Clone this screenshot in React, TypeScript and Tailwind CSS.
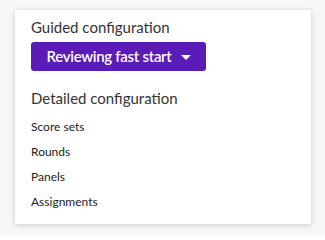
export default function App() {
  return (
    <div className="min-h-[236px] bg-[#f7f7f7] pt-[10px] pl-[15px]" style={{ fontFamily: 'Lato, "Open Sans", sans-serif' }}>
      <div className="w-[296px] h-[214px] bg-white shadow-[0_1px_6px_rgba(0,0,0,0.18)] px-4 pt-[3px]">
        <div className="text-[15px] leading-[28px] text-[#333]">Guided configuration</div>
        <button className="mt-[1px] h-[29px] w-[175px] rounded-[3px] bg-[#5a1bb9] text-white text-[15px] font-semibold tracking-[-0.3px] flex items-center justify-center gap-[9px]">
          <span>Reviewing fast start</span>
          <svg width="10" height="5" viewBox="0 0 10 5" className="mt-[1px]">
            <path d="M0 0h10L5 5z" fill="white" />
          </svg>
        </button>
        <div className="mt-[17px] text-[15px] leading-[20px] text-[#333]">Detailed configuration</div>
        <ul className="mt-[6px] text-[12px] text-[#222]">
          <li className="leading-[25px]">Score sets</li>
          <li className="leading-[25px]">Rounds</li>
          <li className="leading-[25px]">Panels</li>
          <li className="leading-[25px]">Assignments</li>
        </ul>
      </div>
    </div>
  );
}
